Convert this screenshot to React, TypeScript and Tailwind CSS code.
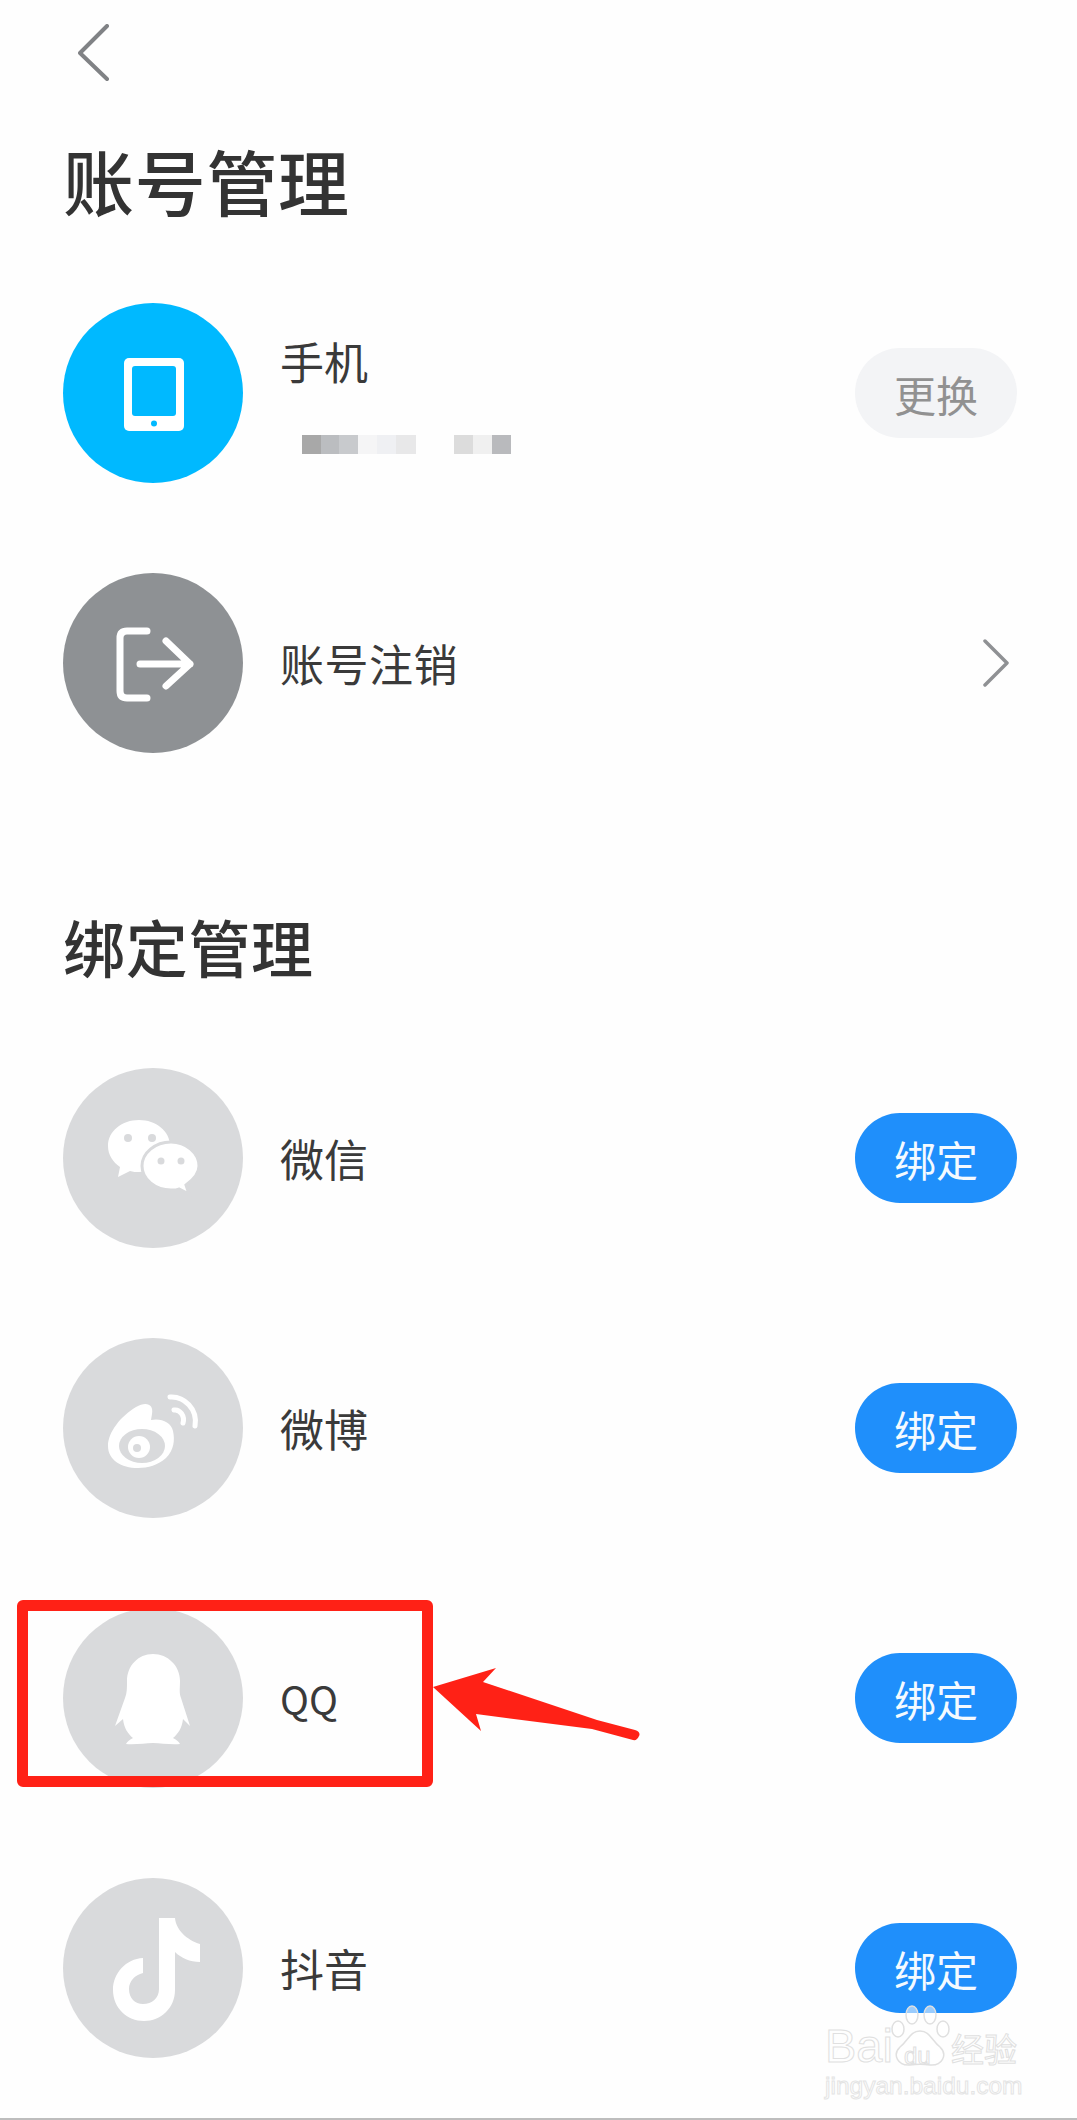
const FONT = "font-['Noto_Sans_CJK_SC','Liberation_Sans',sans-serif]";

function Circle({ color, children }: { color: string; children: React.ReactNode }) {
  return (
    <div className={`h-[180px] w-[180px] shrink-0 rounded-full ${color}`}>
      <svg viewBox="0 0 180 180" className="h-full w-full">
        {children}
      </svg>
    </div>
  );
}

const TabletIcon = (
  <>
    <rect x="61" y="55" width="60" height="73" rx="5" fill="#fff" />
    <rect x="69" y="63" width="44" height="50" rx="3" fill="#00b9ff" />
    <circle cx="91" cy="120.5" r="3" fill="#00b9ff" />
  </>
);

const LogoutIcon = (
  <g fill="none" stroke="#fff" strokeWidth="7" strokeLinecap="round" strokeLinejoin="round">
    <path d="M84 58H64Q57 58 57 65V118Q57 125 64 125H84" />
    <path d="M77 91H127M103 68L127 91L103 113" />
  </g>
);

const WechatIcon = (
  <>
    <path d="M76 52C59 52 45 63 45 78C45 87 50 94 57 99L55 109L67 103C70 104 73 104 76 104C93 104 107 92 107 78C107 63 93 52 76 52Z" fill="#fff" />
    <circle cx="65" cy="70" r="4" fill="#d9dadc" />
    <circle cx="89" cy="70" r="4" fill="#d9dadc" />
    <path d="M108 74C92 74 79 85 79 98C79 111 92 122 108 122C111 122 114 122 116 121L126 126L123 117C130 112 136 106 136 98C136 85 123 74 108 74Z" fill="#fff" stroke="#d9dadc" strokeWidth="3" />
    <circle cx="98" cy="93" r="3.5" fill="#d9dadc" />
    <circle cx="118" cy="93" r="3.5" fill="#d9dadc" />
  </>
);

const WeiboIcon = (
  <>
    <path d="M45 108C45 94 58 78 73 69C83 63 91 66 89 76L88 82C98 80 108 84 110 93C112 102 111 112 103 120C95 127 85 130 75 130C58 130 45 122 45 108Z" fill="#fff" />
    <ellipse cx="79" cy="108" rx="23" ry="17" fill="#d9dadc" />
    <circle cx="76" cy="109" r="11" fill="#fff" />
    <circle cx="74" cy="110" r="4" fill="#d9dadc" />
    <g fill="none" stroke="#fff" strokeWidth="5" strokeLinecap="round">
      <path d="M107 59C121 58 135 71 132 88" />
      <path d="M111 72C117 71 122 78 120 85" />
    </g>
  </>
);

const QQIcon = (
  <path d="M90 46C75 46 64 58 64 73C64 80 64 85 62 90L52 118L60 111C61 120 65 126 70 130C66 132 64 134 63 136C72 137 82 135 90 135C98 135 108 137 117 136C116 134 114 132 110 130C115 126 119 120 120 111L127 118L118 90C116 85 117 80 117 73C117 58 105 46 90 46Z" fill="#fff" />
);

const TiktokIcon = (
  <path d="M96 40H112C113 52 124 62 137 66V84C127 84 118 80 112 74V112C112 130 98 143 81 143C64 143 50 130 50 112C50 95 63 81 80 80V95C72 97 66 103 66 111C66 120 72 126 80 126C89 126 96 120 96 111Z" fill="#fff" />
);

function Pill({ label, muted }: { label: string; muted?: boolean }) {
  return (
    <button
      className={`flex h-[90px] w-[162px] items-center justify-center rounded-full text-[42px] ${
        muted ? "bg-[#f3f4f6] text-[#919191]" : "bg-[#1f8ffb] text-[#f4faff]"
      }`}
    >
      {label}
    </button>
  );
}

function BindRow({ icon, label, small }: { icon: React.ReactNode; label: string; small?: boolean }) {
  return (
    <div className="flex h-[180px] items-center">
      <Circle color="bg-[#d9dadc]">{icon}</Circle>
      <span className={`ml-[37px] flex-1 leading-[60px] text-[#3a3a3a] ${small ? "text-[39px]" : "text-[44px]"}`}>{label}</span>
      <Pill label="绑定" />
    </div>
  );
}

export default function App() {
  return (
    <div className={`relative flex h-[2120px] w-[1077px] flex-col overflow-hidden bg-[#fefefe] ${FONT}`}>
      <div className="pl-[78px] pt-[24px]">
        <svg width="32" height="58" viewBox="0 0 32 58" fill="none" stroke="#808285" strokeWidth="4" strokeLinecap="round" strokeLinejoin="round">
          <path d="M29 2L2 29L29 55" />
        </svg>
      </div>

      <div className="flex flex-1 flex-col pl-[63px] pr-[60px]">
        <h1 className="mt-[57px] h-[80px] text-[71px] tracking-[0.7px] leading-[80px] font-medium text-[#333]">账号管理</h1>

        <div className="mt-[84px] flex h-[180px] items-center">
          <Circle color="bg-[#00b9ff]">{TabletIcon}</Circle>
          <div className="ml-[37px] flex-1 self-start pt-[28px]">
            <div className="text-[44px] leading-[60px] text-[#3a3a3a]">手机</div>
            <div className="mt-[44px] ml-[22px] flex h-[19px]">
              <div className="h-full w-[19px] bg-[#a8a8a8]" />
              <div className="h-full w-[18px] bg-[#bbbdc0]" />
              <div className="h-full w-[19px] bg-[#c8cacd]" />
              <div className="h-full w-[19px] bg-[#f5f5f6]" />
              <div className="h-full w-[19px] bg-[#eff0f3]" />
              <div className="h-full w-[20px] bg-[#e8e8e9]" />
              <div className="h-full w-[38px]" />
              <div className="h-full w-[19px] bg-[#dcdcdc]" />
              <div className="h-full w-[19px] bg-[#f0f0f0]" />
              <div className="h-full w-[19px] bg-[#b9babd]" />
            </div>
          </div>
          <Pill label="更换" muted />
        </div>

        <div className="mt-[90px] flex h-[180px] items-center">
          <Circle color="bg-[#8e9194]">{LogoutIcon}</Circle>
          <span className="ml-[37px] flex-1 text-[44px] tracking-[0.5px] leading-[60px] text-[#3a3a3a]">账号注销</span>
          <svg width="26" height="48" viewBox="0 0 26 48" fill="none" stroke="#8f9194" strokeWidth="3.5" strokeLinecap="round" strokeLinejoin="round" className="mr-[8px]">
            <path d="M2 2L24 24L2 46" />
          </svg>
        </div>

        <h2 className="mt-[158px] h-[70px] text-[62px] tracking-[0.7px] leading-[70px] font-medium text-[#333]">绑定管理</h2>

        <div className="mt-[87px] flex flex-col gap-[90px]">
          <BindRow icon={WechatIcon} label="微信" />
          <BindRow icon={WeiboIcon} label="微博" />
          <BindRow icon={QQIcon} label="QQ" small />
          <BindRow icon={TiktokIcon} label="抖音" />
        </div>
      </div>

      <div className="h-[2px] bg-[#bdbdbd]" />

      {/* Red annotation box */}
      <div className="absolute left-[17px] top-[1600px] h-[187px] w-[416px] rounded-[6px] border-[11px] border-[#ff2116]" />

      {/* Red annotation arrow */}
      <svg className="absolute left-[430px] top-[1660px]" width="225" height="90" viewBox="430 1660 225 90">
        <path d="M433 1687L496 1668L483 1682L597 1720L635 1730Q641 1732 639 1736Q637 1741 633 1740L592 1729L476 1714L481 1731Z" fill="#ff2116" />
      </svg>

      {/* Baidu watermark */}
      <div className="absolute left-[825px] top-[2005px] w-[195px] font-['Liberation_Sans','Noto_Sans_CJK_SC',sans-serif] text-transparent">
        <div className="relative flex h-[66px] items-end">
          <span className="text-[47px] leading-[50px] [-webkit-text-stroke:1px_#e0e0e0]">Bai</span>
          <svg className="absolute left-[65px] top-0" width="60" height="64" viewBox="0 0 60 64" fill="#ffffff" fillOpacity="0.55" stroke="#e0e0e0" strokeWidth="1.5">
            <ellipse cx="22" cy="10" rx="6" ry="9" />
            <ellipse cx="40" cy="10" rx="6" ry="9" />
            <ellipse cx="8" cy="24" rx="6" ry="8" />
            <ellipse cx="53" cy="24" rx="6" ry="8" />
            <path d="M30 26C20 26 18 36 10 42C2 50 8 61 20 60C26 59 34 59 40 60C52 61 58 50 50 42C42 36 40 26 30 26Z" fill="#ffffff" fillOpacity="0.9" />
          </svg>
          <span className="absolute left-[79px] top-[38px] text-[24px] leading-[26px] [-webkit-text-stroke:1px_#e0e0e0]">du</span>
          <span className="absolute right-[3px] bottom-0 text-[33px] leading-[40px] [-webkit-text-stroke:1px_#e0e0e0]">经验</span>
        </div>
        <div className="mt-[2px] whitespace-nowrap text-[24.5px] leading-[26px] [-webkit-text-stroke:1px_#e4e4e4]">jingyan.baidu.com</div>
      </div>
    </div>
  );
}
